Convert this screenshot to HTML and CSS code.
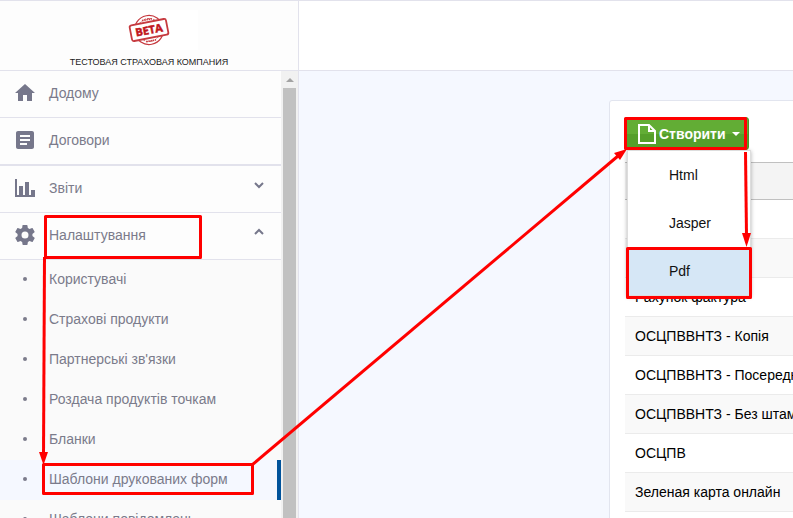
FILE: index.html
```html
<!DOCTYPE html>
<html lang="uk">
<head>
    <meta charset="UTF-8">
    <meta name="viewport" content="width=device-width, initial-scale=1.0">
    <title>Шаблони друкованих форм</title>
    <link rel="stylesheet" href="styles.css">
</head>
<body>
    <!-- Бічна панель -->
    <aside class="sidebar">
        <div class="brand">
            <svg class="brand-logo" width="98" height="40" viewBox="0 0 98 40" role="img" aria-label="Beta">
                <g transform="rotate(-11 49 20)" fill="none" stroke="#c63a3f">
                    <circle cx="49" cy="20" r="14.500" stroke-width="1.2"/>
                    <circle cx="49" cy="20" r="11.500" stroke-width=".8" stroke-dasharray="2 1"/>
                    <path d="M44 9.500h10M44 31h10" stroke-width="1.600" stroke-dasharray="1.500 .7"/>
                    <rect x="30.500" y="12" width="37" height="16" rx="2" fill="#fff" stroke-width="1.800"/>
                    <text class="brand-stamp" x="49" y="24" text-anchor="middle" stroke="#c1161c" stroke-width=".5" fill="#c1161c">BETA</text>
                </g>
            </svg>
            <div class="brand-name">ТЕСТОВАЯ СТРАХОВАЯ КОМПАНИЯ</div>
        </div>

        <div class="sidebar-body">
            <nav class="menu">
                <a class="menu-item" href="#">
                    <svg class="menu-icon" viewBox="0 0 24 24"><path d="M10 20v-6h4v6h5v-8h3L12 3 2 12h3v8z"/></svg>
                    <span>Додому</span>
                </a>
                <a class="menu-item menu-item-last" href="#">
                    <svg class="menu-icon" viewBox="0 0 24 24"><path d="M19 3H5c-1.100 0-2 .9-2 2v14c0 1.100.9 2 2 2h14c1.100 0 2-.9 2-2V5c0-1.100-.9-2-2-2zm-5 14H7v-2h7v2zm3-4H7v-2h10v2zm0-4H7V7h10v2z"/></svg>
                    <span>Договори</span>
                </a>
                <button class="menu-item" type="button">
                    <svg class="menu-icon" viewBox="0 0 24 24"><path d="M2 3h2v16h2v-9h4v9h2V6h4v13h2v-5h4v7H2z"/></svg>
                    <span>Звіти</span>
                    <svg class="menu-arrow" viewBox="0 0 10 10"><path d="M1 3l4 4 4-4"/></svg>
                </button>
                <button class="menu-item" type="button" aria-expanded="true">
                    <svg class="menu-icon" viewBox="0 0 24 24"><path d="M19.400 13c.04-.3.060-.65.060-1s-.02-.7-.06-1l2.110-1.650c.2-.15.250-.42.120-.64l-2-3.460c-.12-.22-.39-.3-.61-.22l-2.490 1c-.52-.4-1.080-.73-1.690-.98l-.38-2.650A.5.5 0 0 0 14 2h-4c-.25 0-.46.180-.5.420l-.38 2.650c-.61.250-1.170.590-1.690.980l-2.490-1c-.23-.09-.49 0-.61.220l-2 3.460c-.13.220-.07.490.120.640L4.600 11c-.04.300-.07.650-.07 1s.02.700.060 1l-2.110 1.650c-.19.150-.24.420-.12.640l2 3.460c.12.220.39.300.61.220l2.490-1c.52.400 1.080.730 1.690.980l.38 2.650c.03.240.24.420.49.420h4c.25 0 .46-.18.490-.42l.38-2.650c.61-.25 1.170-.59 1.690-.98l2.490 1c.23.090.49 0 .61-.22l2-3.460c.12-.22.070-.49-.12-.64zM12 15.500a3.500 3.500 0 1 1 0-7 3.500 3.500 0 0 1 0 7z"/></svg>
                    <span>Налаштування</span>
                    <svg class="menu-arrow" viewBox="0 0 10 10"><path d="M1 7l4-4 4 4"/></svg>
                </button>
                <ul class="submenu">
                    <li><a href="#">Користувачі</a></li>
                    <li><a href="#">Страхові продукти</a></li>
                    <li><a href="#">Партнерські зв'язки</a></li>
                    <li><a href="#">Роздача продуктів точкам</a></li>
                    <li><a href="#">Бланки</a></li>
                    <li><a class="active" href="#">Шаблони друкованих форм</a></li>
                    <li><a href="#">Шаблони повідомлень</a></li>
                </ul>
            </nav>
            <div class="scrollbar">
                <div class="scrollbar-up"></div>
                <div class="scrollbar-thumb"></div>
            </div>
        </div>
    </aside>

    <!-- Основна частина -->
    <div class="page">
        <header class="topbar"></header>
        <main class="content">
            <section class="card">
                <div class="dropdown">
                    <button class="btn-create" type="button" aria-haspopup="true" aria-expanded="true">
                        <svg class="file-icon" viewBox="0 0 18 20"><path d="M1 1h10l6 6v12H1zM11 1v6h6"/></svg>
                        <span>Створити</span>
                        <span class="caret"></span>
                    </button>
                    <ul class="dropdown-menu">
                        <li><a href="#">Html</a></li>
                        <li><a href="#">Jasper</a></li>
                        <li><a class="selected" href="#">Pdf</a></li>
                    </ul>
                </div>

                <table class="grid">
                    <thead>
                        <tr><th></th></tr>
                    </thead>
                    <tbody>
                        <tr><td></td></tr>
                        <tr><td></td></tr>
                        <tr><td>Рахунок фактура</td></tr>
                        <tr><td>ОСЦПВВНТЗ - Копія</td></tr>
                        <tr><td>ОСЦПВВНТЗ - Посередник</td></tr>
                        <tr><td>ОСЦПВВНТЗ - Без штампу</td></tr>
                        <tr><td>ОСЦПВ</td></tr>
                        <tr><td>Зеленая карта онлайн</td></tr>
                        <tr><td></td></tr>
                    </tbody>
                </table>
            </section>
        </main>
    </div>

    <!-- Червоні підказки: рамки та стрілки поверх сторінки -->
    <svg class="hints" width="793" height="518" viewBox="0 0 793 518" aria-hidden="true">
        <g fill="none" stroke="#f00" stroke-width="3" stroke-linejoin="round">
            <rect x="45.500" y="216.500" width="155" height="41"/>
            <rect x="43.500" y="464.500" width="209" height="29"/>
            <rect x="625.500" y="118.500" width="120" height="30"/>
            <rect x="627.500" y="248.500" width="123" height="49"/>
            <path d="M44.500 257L43.500 455"/>
            <path d="M252 465L618 156"/>
            <path d="M745.500 152L746.500 236"/>
        </g>
        <g fill="#f00">
            <path d="M39 452h9l-4.500 13z"/>
            <path d="M627 149l-7 11-6-7z"/>
            <path d="M742 233h9l-4.500 14z"/>
        </g>
    </svg>
</body>
</html>
```
FILE: styles.css
```css
* {
    box-sizing: border-box;
}

body {
    margin: 0;
    display: flex;
    height: 100vh;
    overflow: hidden;
    border-top: 1px solid #e2e2ec;
    font-family: "Liberation Sans", Arial, sans-serif;
    font-size: 14px;
    background: #f5f8ff;
}

a {
    color: inherit;
    text-decoration: none;
}

ul {
    list-style: none;
    margin: 0;
    padding: 0;
}

/* Бічна панель */
.sidebar {
    display: flex;
    flex-direction: column;
    flex: none;
    width: 299px;
    border-right: 1px solid #e2e2ec;
    background: #fdfdfd;
}

.brand {
    flex: none;
    height: 70px;
    padding-top: 9px;
    border-bottom: 1px solid #e2e2ec;
    text-align: center;
}

.brand-logo {
    display: block;
    margin: 0 auto;
    background: #fff;
}

.brand-stamp {
    font-family: "Open Sans", sans-serif;
    font-size: 11px;
    font-weight: bold;
}

.brand-name {
    margin-top: 6px;
    font-size: 9px;
    line-height: 12px;
    color: #222;
}

.sidebar-body {
    display: flex;
    flex: 1;
    min-height: 0;
}

.menu {
    flex: 1;
    overflow: hidden;
    color: #7b7b8b;
}

.menu-item {
    display: flex;
    align-items: center;
    width: 100%;
    height: 47px;
    padding: 0 17px 2px 13px;
    border: 0;
    border-bottom: 1px solid #e2e2ec;
    background: none;
    font: inherit;
    color: inherit;
    text-align: left;
}

.menu-item-last {
    height: 48px;
    border-bottom-width: 2px;
}

.menu-icon {
    width: 24px;
    height: 24px;
    margin-right: 12px;
    fill: #76778b;
}

.menu-arrow {
    width: 10px;
    height: 10px;
    margin: 0 0 6px auto;
    fill: none;
    stroke: #76778b;
    stroke-width: 2;
}

.submenu {
    background: #fafafa;
}

.submenu a {
    display: flex;
    align-items: center;
    height: 40px;
    padding-bottom: 2px;
    padding-left: 23px;
}

.submenu a::before {
    content: "";
    width: 4px;
    height: 4px;
    margin-right: 22px;
    border-radius: 50%;
    background: #7b7b8b;
}

.submenu .active {
    border-right: 4px solid #00539b;
    background: #f5f8ff;
}

/* Смуга прокрутки */
.scrollbar {
    flex: none;
    display: flex;
    flex-direction: column;
    align-items: center;
    width: 17px;
    background: #f1f1f1;
}

.scrollbar-up {
    height: 17px;
    padding-top: 7px;
}

.scrollbar-up::before {
    content: "";
    display: block;
    border: 4px solid transparent;
    border-top: 0;
    border-bottom-color: #a3a3a3;
}

.scrollbar-thumb {
    flex: 1;
    width: 13px;
    background: #c1c1c1;
}

/* Основна частина */
.page {
    flex: 1;
    min-width: 0;
    overflow: hidden;
}

.topbar {
    height: 70px;
    border-bottom: 1px solid #e2e2ec;
    background: #fff;
}

.content {
    padding: 29px 0 0 310px;
}

.card {
    width: 640px;
    padding: 16px 15px;
    border: 1px solid #e2e5ef;
    border-radius: 3px;
    background: #fff;
}

.dropdown {
    position: relative;
    margin-bottom: 12px;
}

.btn-create {
    display: flex;
    align-items: center;
    height: 33px;
    padding: 0 8px 0 12px;
    border: 1px solid #4b9626;
    border-radius: 3px;
    background: linear-gradient(#62ad35 50%, #559f2b 50%);
    color: #fff;
    font: inherit;
    font-weight: bold;
}

.file-icon {
    width: 18px;
    height: 20px;
    margin-right: 3px;
    fill: none;
    stroke: #fff;
    stroke-width: 2;
}

.caret {
    margin-left: 6px;
    border: 4px solid transparent;
    border-top-color: #fff;
    border-bottom: 0;
}

.dropdown-menu {
    position: absolute;
    top: 100%;
    left: 2px;
    width: 124px;
    border: 1px solid #ddd;
    background: #fff;
    box-shadow: 0 1px 4px rgba(0, 0, 0, 0.3);
}

.dropdown-menu a {
    display: block;
    padding-left: 41px;
    line-height: 48px;
    color: #111;
}

.dropdown-menu .selected {
    background: #d6e7f6;
}

/* Таблиця шаблонів */
.grid {
    width: 100%;
    border-collapse: separate;
    border-spacing: 0;
    color: #000;
}

.grid th {
    height: 38px;
    border-top: 1px solid #c0c0c0;
    border-bottom: 1px solid #c0c0c0;
    background: #f4f4f4;
}

.grid td {
    height: 39px;
    padding: 0 10px;
    border-bottom: 1px solid #ebebeb;
    white-space: nowrap;
}

.grid tr:nth-child(even) td {
    background: #f9f9f9;
}

.hints {
    position: absolute;
    top: 0;
    left: 0;
    pointer-events: none;
}
```
